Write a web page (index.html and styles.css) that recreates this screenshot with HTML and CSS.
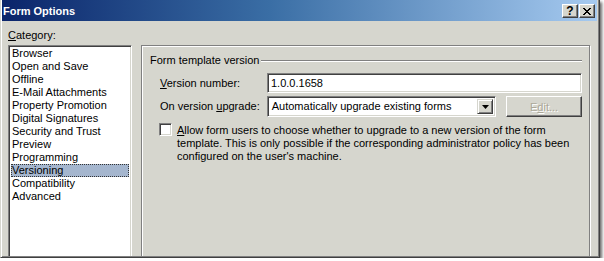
FILE: index.html
```html
<!DOCTYPE html>
<html>
<head>
    <meta charset="UTF-8">
    <title>Form Options</title>
    <link rel="stylesheet" href="styles.css">
</head>
<body>
    <div class="window">
        <div class="titlebar">
            <span class="title">Form Options</span>
            <div class="caption-buttons">
                <span class="cap-btn help">?</span>
                <span class="cap-btn">
                    <svg width="8" height="7" viewBox="0 0 8 7">
                        <path d="M0 0h2v1h-2zM6 0h2v1h-2zM1 1h2v1h-2zM5 1h2v1h-2zM2 2h4v1h-4zM3 3h2v1h-2zM2 4h4v1h-4zM1 5h2v1h-2zM5 5h2v1h-2zM0 6h2v1h-2zM6 6h2v1h-2z" fill="#000"/>
                    </svg>
                </span>
            </div>
        </div>

        <div class="client">
            <div class="category">
                <div class="cat-label"><u>C</u>ategory:</div>
                <ul class="listbox">
                    <li>Browser</li>
                    <li>Open and Save</li>
                    <li>Offline</li>
                    <li>E-Mail Attachments</li>
                    <li>Property Promotion</li>
                    <li>Digital Signatures</li>
                    <li>Security and Trust</li>
                    <li>Preview</li>
                    <li>Programming</li>
                    <li class="selected">Versioning</li>
                    <li>Compatibility</li>
                    <li>Advanced</li>
                </ul>
            </div>

            <div class="panel">
                <div class="group-head">
                    <span>Form template version</span>
                    <span class="rule"></span>
                </div>

                <div class="field-row">
                    <label class="field-label"><u>V</u>ersion number:</label>
                    <div class="textbox">1.0.0.1658</div>
                </div>

                <div class="field-row second">
                    <label class="field-label">On version <u>u</u>pgrade:</label>
                    <div class="combo">
                        <span class="combo-text">Automatically upgrade existing forms</span>
                        <span class="drop-btn">
                            <svg width="7" height="4" viewBox="0 0 7 4"><path d="M0 0h7l-3.5 4z" fill="#000"/></svg>
                        </span>
                    </div>
                    <span class="edit-btn">E<u>d</u>it...</span>
                </div>

                <div class="check-row">
                    <span class="checkbox"></span>
                    <p class="check-text"><u>A</u>llow form users to choose whether to upgrade to a new version of the form template. This is only possible if the corresponding administrator policy has been configured on the user's machine.</p>
                </div>
            </div>
        </div>
    </div>
</body>
</html>
```

FILE: styles.css
```css
body {
    margin: 0;
    background: #fff;
}
.window {
    width: 600px;
    height: 258px;
    box-sizing: border-box;
    display: flex;
    flex-direction: column;
    overflow: hidden;
    background: #d6d6ce;
    border-style: solid;
    border-width: 0 1px 1px 1px;
    border-color: #d6d6ce #404040 #404040 #d6d6ce;
    box-shadow: inset 1px 0 0 #fff, inset -1px -1px 0 #808080, 2px 2px 3px rgba(0, 0, 0, 0.6);
    padding: 0 2px 1px 1px;
    font-family: "Liberation Sans", Arial, sans-serif;
    font-size: 11px;
    color: #000;
}
.titlebar {
    height: 21px;
    flex: none;
    display: flex;
    background: linear-gradient(to right, #0a246a, #3a6ea5 45%, #a6caf0);
}
.title {
    color: #fff;
    font-weight: bold;
    line-height: 22px;
    padding-left: 1px;
}
.caption-buttons {
    margin-left: auto;
    margin-top: 4px;
    margin-right: 2px;
    display: flex;
    gap: 1px;
}
.cap-btn {
    width: 16px;
    height: 14px;
    box-sizing: border-box;
    display: flex;
    align-items: center;
    justify-content: center;
    background: #d6d6ce;
    border: 1px solid;
    border-color: #fff #404040 #404040 #fff;
    box-shadow: inset -1px -1px 0 #808080;
}
.help {
    font-weight: bold;
    font-size: 12px;
    line-height: 12px;
}
.client {
    flex: 1;
    display: flex;
    overflow: hidden;
    padding-left: 6px;
}
.category {
    width: 124px;
    display: flex;
    flex-direction: column;
}
.cat-label {
    padding-top: 8px;
    line-height: 13px;
    margin-bottom: 3px;
}
.listbox {
    flex: 1;
    margin: 0 0 -4px 0;
    padding: 1px 0 0 1px;
    list-style: none;
    background: #fff;
    border: 1px solid;
    border-color: #808080 #fff #fff #808080;
    box-shadow: inset 1px 1px 0 #404040, inset -1px -1px 0 #d6d6ce;
}
.listbox li {
    height: 13px;
    line-height: 13px;
    padding-left: 1px;
    margin-left: 1px;
    margin-right: 2px;
    white-space: nowrap;
}
.listbox li.selected {
    background: #a5b6ce;
    outline: 1px dotted #333;
    outline-offset: -1px;
}
.panel {
    width: 449px;
    box-sizing: border-box;
    margin: 24px 0 -4px 9px;
    padding: 8px 7px 0 8px;
    border: 1px solid #808080;
    box-shadow: inset 1px 1px 0 #fff, 1px 1px 0 #fff;
}
.group-head {
    display: flex;
    align-items: center;
    height: 13px;
    line-height: 13px;
}
.rule {
    flex: 1;
    margin-left: 2px;
    border-top: 1px solid #808080;
    border-bottom: 1px solid #fff;
}
.field-row {
    display: flex;
    align-items: center;
    margin-top: 6px;
}
.field-row.second {
    margin-top: 3px;
}
.field-label {
    width: 107px;
    margin-left: 10px;
    line-height: 13px;
}
.textbox,
.combo {
    box-sizing: border-box;
    height: 20px;
    line-height: 16px;
    padding-left: 3px;
    background: #fff;
    border: 1px solid;
    border-color: #808080 #fff #fff #808080;
    box-shadow: inset 1px 1px 0 #404040, inset -1px -1px 0 #d6d6ce;
}
.textbox {
    width: 315px;
    padding-top: 1px;
}
.combo {
    width: 230px;
    height: 21px;
    display: flex;
    padding: 2px 2px 2px 4px;
}
.combo-text {
    flex: 1;
    line-height: 15px;
    white-space: nowrap;
}
.drop-btn {
    width: 16px;
    box-sizing: border-box;
    display: flex;
    align-items: center;
    justify-content: center;
    background: #d6d6ce;
    border: 1px solid;
    border-color: #d6d6ce #404040 #404040 #d6d6ce;
    box-shadow: inset 1px 1px 0 #fff, inset -1px -1px 0 #808080;
}
.edit-btn {
    width: 76px;
    height: 21px;
    box-sizing: border-box;
    margin-left: 10px;
    display: flex;
    align-items: center;
    justify-content: center;
    color: #aca899;
    text-shadow: 1px 1px 0 #fff;
    background: #d6d6ce;
    border: 1px solid;
    border-color: #fff #404040 #404040 #fff;
    box-shadow: inset -1px -1px 0 #808080;
}
.check-row {
    display: flex;
    align-items: flex-start;
    margin-top: 6px;
}
.checkbox {
    flex: none;
    width: 13px;
    height: 13px;
    box-sizing: border-box;
    margin-left: 9px;
    background: #fff;
    border: 1px solid;
    border-color: #808080 #fff #fff #808080;
    box-shadow: inset 1px 1px 0 #404040, inset -1px -1px 0 #d6d6ce;
}
.check-text {
    width: 404px;
    margin: 1px 0 0 5px;
    line-height: 13px;
}
```
